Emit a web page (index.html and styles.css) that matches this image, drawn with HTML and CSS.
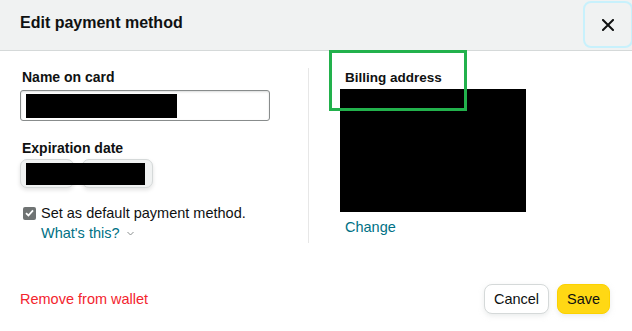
FILE: index.html
```html
<!DOCTYPE html>
<html>
<head>
<meta charset="utf-8">
<title>Edit payment method</title>
<link rel="stylesheet" href="styles.css">
</head>
<body>
<div class="modal">
  <div class="modal-head">
    <h1>Edit payment method</h1>
    <button class="close" aria-label="Close">
      <svg width="12" height="12" viewBox="0 0 12 12"><path d="M1 1L11 11M11 1L1 11" stroke="#0f1111" stroke-width="2" stroke-linecap="square"/></svg>
    </button>
  </div>
  <div class="modal-body">
    <div class="col-left">
      <label class="field-label">Name on card</label>
      <div class="input"><span class="redact name-redact"></span></div>
      <label class="field-label exp-label">Expiration date</label>
      <div class="selects">
        <div class="select month"></div>
        <div class="select year"></div>
        <span class="redact exp-redact"></span>
      </div>
      <div class="check-row">
        <span class="checkbox">
          <svg width="9" height="8" viewBox="0 0 9 8"><path d="M1 4.2L3.4 6.5L8 1.3" fill="none" stroke="#fff" stroke-width="1.8"/></svg>
        </span>
        <span>Set as default payment method.</span>
      </div>
      <a class="link whats">What's this?
        <svg width="7" height="5" viewBox="0 0 7 5"><path d="M0.5 1L3.5 4L6.5 1" fill="none" stroke="#8a8f8f" stroke-width="1"/></svg>
      </a>
    </div>
    <div class="col-right">
      <label class="field-label billing">Billing address</label>
      <div class="redact address-redact"></div>
      <a class="link change">Change</a>
    </div>
  </div>
  <div class="modal-foot">
    <a class="remove">Remove from wallet</a>
    <div class="buttons">
      <button class="btn cancel">Cancel</button>
      <button class="btn save">Save</button>
    </div>
  </div>
</div>
<div class="highlight"></div>
</body>
</html>
```

FILE: styles.css
```css
body {
  margin: 0;
  background-color: #fff;
  font-family: "Liberation Sans", Arial, sans-serif;
  font-size: 14.5px;
  color: #0f1111;
}
.modal {
  width: 632px;
  height: 331px;
  overflow: hidden;
}
.modal-head {
  display: flex;
  align-items: flex-start;
  justify-content: space-between;
  height: 50px;
  background-color: #f0f2f2;
  border-bottom: 1px solid #d5d9d9;
}
.modal-head h1 {
  margin: 0;
  padding: 13px 0 0 20px;
  font-size: 16px;
  line-height: 20px;
  font-weight: bold;
}
.close {
  width: 50px;
  height: 47px;
  margin-top: 1px;
  margin-right: -1px;
  border: 2px solid #c8f1fc;
  border-radius: 8px;
  background: #f0f2f2;
  display: flex;
  align-items: center;
  justify-content: center;
  padding: 0;
}
.modal-body {
  display: flex;
  padding: 17px 0 0 20px;
}
.col-left {
  width: 288px;
}
.col-right {
  border-left: 1px solid #e7e7e7;
  padding-left: 36px;
  width: 250px;
}
.field-label {
  display: block;
  font-size: 14px;
  line-height: 19px;
  font-weight: bold;
  padding-left: 2px;
}
.billing {
  font-size: 13.5px;
  padding-left: 0;
}
.input, .select { box-sizing: border-box; }
.input {
  width: 250px;
  height: 31px;
  margin-top: 3px;
  border: 1px solid #888c8c;
  border-radius: 3px;
  box-shadow: 0 1px 2px rgba(15,17,17,.15) inset;
  padding: 3px 0 0 5px;
}
.redact {
  display: block;
  background-color: #000;
}
.name-redact {
  width: 151px;
  height: 24px;
}
.exp-label {
  margin-top: 18px;
}
.selects {
  position: relative;
  display: flex;
  gap: 8px;
  margin-top: 1px;
}
.select {
  height: 29px;
  background-color: #f0f2f2;
  border: 1px solid #d5d9d9;
  border-radius: 7px;
  box-shadow: 0 2px 4px rgba(15,17,17,.12);
}
.select.month { width: 54px; }
.select.year { width: 71px; }
.exp-redact {
  position: absolute;
  left: 6px;
  top: 4px;
  width: 119px;
  height: 22px;
}
.check-row {
  display: flex;
  align-items: center;
  gap: 5px;
  margin-top: 15px;
  padding-left: 3px;
  line-height: 20px;
}
.checkbox {
  width: 13px;
  height: 13px;
  border-radius: 2px;
  background-color: #6f7373;
  display: flex;
  align-items: center;
  justify-content: center;
}
.link {
  color: #007185;
  text-decoration: none;
}
.whats {
  display: block;
  padding-left: 21px;
  line-height: 20px;
}
.whats svg {
  margin-left: 3px;
  vertical-align: 2px;
}
.address-redact {
  width: 186px;
  height: 123px;
  margin: 2px 0 0 -5px;
}
.change {
  display: block;
  margin-top: 5px;
  line-height: 20px;
}
.modal-foot {
  display: flex;
  align-items: center;
  justify-content: space-between;
  margin-top: 41px;
  padding: 0 22px 0 20px;
}
.remove {
  color: #f3242e;
}
.buttons {
  display: flex;
  gap: 8px;
}
.btn {
  height: 30px;
  border-radius: 8px;
  font-family: inherit;
  font-size: 14.5px;
  color: #0f1111;
  padding: 0;
}
.cancel {
  width: 65px;
  background-color: #fff;
  border: 1px solid #d5d9d9;
  box-shadow: 0 2px 5px rgba(213,217,217,.5);
}
.save {
  width: 53px;
  background-color: #ffd814;
  border: 1px solid #fcd200;
  box-shadow: 0 2px 5px rgba(213,217,217,.5);
}
.highlight {
  position: absolute;
  left: 329px;
  top: 50px;
  width: 132px;
  height: 55px;
  border: 3px solid #22b14c;
}
```
